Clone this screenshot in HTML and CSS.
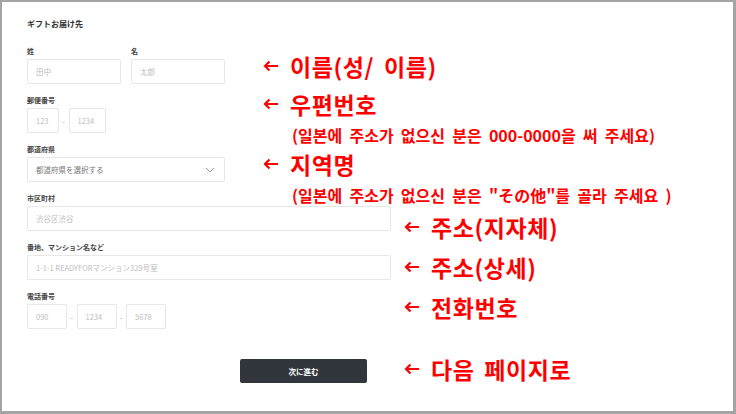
FILE: index.html
```html
<!DOCTYPE html>
<html lang="ja">
<head>
<meta charset="utf-8">
<title>ギフトお届け先</title>
<link rel="stylesheet" href="styles.css">
</head>
<body>
<div class="frame">
  <div class="form">
    <h1 class="title">ギフトお届け先</h1>

    <div class="row">
      <div class="field">
        <div class="label">姓</div>
        <div class="box w-name"><span class="ph">田中</span></div>
      </div>
      <div class="field">
        <div class="label">名</div>
        <div class="box w-name"><span class="ph">太郎</span></div>
      </div>
    </div>

    <div class="field">
      <div class="label">郵便番号</div>
      <div class="split">
        <div class="box w-zip1"><span class="ph">123</span></div>
        <span class="dash">-</span>
        <div class="box w-zip2"><span class="ph">1234</span></div>
      </div>
    </div>

    <div class="field">
      <div class="label">都道府県</div>
      <div class="box w-select select">
        <span class="val">都道府県を選択する</span>
        <svg class="chev" width="10" height="6" viewBox="0 0 10 6"><path d="M1 1 L5 5 L9 1" fill="none" stroke="#9a9a9a" stroke-width="1"/></svg>
      </div>
    </div>

    <div class="field">
      <div class="label">市区町村</div>
      <div class="box w-long"><span class="ph">渋谷区渋谷</span></div>
    </div>

    <div class="field">
      <div class="label">番地、マンション名など</div>
      <div class="box w-long"><span class="ph">1-1-1 READYFORマンション329号室</span></div>
    </div>

    <div class="field">
      <div class="label">電話番号</div>
      <div class="split">
        <div class="box w-tel"><span class="ph">090</span></div>
        <span class="dash">-</span>
        <div class="box w-tel"><span class="ph">1234</span></div>
        <span class="dash">-</span>
        <div class="box w-tel"><span class="ph">5678</span></div>
      </div>
    </div>

    <div class="actions">
      <button class="next">次に進む</button>
    </div>
  </div>

  <div class="note n1"><svg class="arr" width="16" height="12" viewBox="0 0 16 12"><path d="M15 6 H2 M6.5 1.5 L2 6 L6.5 10.5" fill="none" stroke="#ff0000" stroke-width="2.2"/></svg><span class="big">이름(성/ 이름)</span></div>
  <div class="note n2"><svg class="arr" width="16" height="12" viewBox="0 0 16 12"><path d="M15 6 H2 M6.5 1.5 L2 6 L6.5 10.5" fill="none" stroke="#ff0000" stroke-width="2.2"/></svg><span class="big">우편번호</span></div>
  <div class="sub s2">(일본에 주소가 없으신 분은 000-0000을 써 주세요)</div>
  <div class="note n3"><svg class="arr" width="16" height="12" viewBox="0 0 16 12"><path d="M15 6 H2 M6.5 1.5 L2 6 L6.5 10.5" fill="none" stroke="#ff0000" stroke-width="2.2"/></svg><span class="big">지역명</span></div>
  <div class="sub s3">(일본에 주소가 없으신 분은 "その他"를 골라 주세요 )</div>
  <div class="note n4"><svg class="arr" width="16" height="12" viewBox="0 0 16 12"><path d="M15 6 H2 M6.5 1.5 L2 6 L6.5 10.5" fill="none" stroke="#ff0000" stroke-width="2.2"/></svg><span class="big">주소(지자체)</span></div>
  <div class="note n5"><svg class="arr" width="16" height="12" viewBox="0 0 16 12"><path d="M15 6 H2 M6.5 1.5 L2 6 L6.5 10.5" fill="none" stroke="#ff0000" stroke-width="2.2"/></svg><span class="big">주소(상세)</span></div>
  <div class="note n6"><svg class="arr" width="16" height="12" viewBox="0 0 16 12"><path d="M15 6 H2 M6.5 1.5 L2 6 L6.5 10.5" fill="none" stroke="#ff0000" stroke-width="2.2"/></svg><span class="big">전화번호</span></div>
  <div class="note n7"><svg class="arr" width="16" height="12" viewBox="0 0 16 12"><path d="M15 6 H2 M6.5 1.5 L2 6 L6.5 10.5" fill="none" stroke="#ff0000" stroke-width="2.2"/></svg><span class="big">다음 페이지로</span></div>
</div>
</body>
</html>
```

FILE: styles.css
```css
* { box-sizing: border-box; }
html, body { margin: 0; padding: 0; background: #fff; }

.frame {
  position: relative;
  width: 736px;
  height: 414px;
  background: #fff;
  border-style: solid;
  border-color: #a4a4a4;
  border-width: 2px 3px 3px 2px;
  overflow: hidden;
  font-family: "Noto Sans CJK JP", "Noto Sans", sans-serif;
}

.form {
  padding: 16px 0 0 25px;
  display: flex;
  flex-direction: column;
  gap: 11px;
}

.title {
  margin: 0 0 5px 0;
  font-size: 8px;
  line-height: 12px;
  font-weight: 700;
  color: #333;
}

.row { display: flex; gap: 10px; }

.field { display: flex; flex-direction: column; gap: 3px; }

.label {
  font-size: 7px;
  line-height: 10px;
  font-weight: 700;
  color: #444;
}

.box {
  height: 25px;
  border: 1px solid #e7e7e7;
  border-radius: 2px;
  display: flex;
  align-items: center;
  padding-left: 8px;
  background: #fff;
}

.ph {
  font-size: 7.5px;
  color: #bdbdbd;
  white-space: nowrap;
}

.val {
  font-size: 7.5px;
  color: #777;
  white-space: nowrap;
}

.w-name { width: 94px; }
.w-zip1 { width: 32px; }
.w-zip2 { width: 37px; }
.w-select { width: 198px; }
.w-long { width: 364px; }
.w-tel { width: 40px; }

.select { justify-content: space-between; padding-right: 9px; }
.chev { display: block; }

.split { display: flex; align-items: center; }
.dash {
  width: 9.5px;
  text-align: center;
  font-size: 7px;
  color: #999;
}

.actions { display: flex; padding: 19px 0 0 213px; }
.next {
  display: block;
  width: 127px;
  height: 24px;
  border: 0;
  border-radius: 2px;
  background: #31363c;
  color: #fff;
  font-family: "Noto Sans CJK JP", sans-serif;
  font-size: 7.5px;
  font-weight: 700;
  padding: 0;
}

/* annotations (callouts over the screenshot) */
.note {
  position: absolute;
  display: flex;
  align-items: center;
  gap: 11px;
  color: #ff0000;
  font-family: "Noto Sans CJK KR", "Noto Sans", sans-serif;
  font-weight: 700;
  white-space: nowrap;
}
.arr { display: block; }
.big { font-size: 23px; line-height: 26px; letter-spacing: 0.6px; word-spacing: 4px; }

.sub {
  position: absolute;
  color: #ff0000;
  font-family: "Noto Sans CJK KR", "Noto Sans", sans-serif;
  font-weight: 700;
  font-size: 16px;
  line-height: 18px;
  word-spacing: 3.6px;
  white-space: nowrap;
}

.n1 { left: 261px; top: 51px; }
.n2 { left: 261px; top: 89px; }
.s2 { left: 290px; top: 124px; }
.n3 { left: 261px; top: 149px; }
.s3 { left: 290px; top: 184px; }
.n4 { left: 402px; top: 212px; }
.n5 { left: 402px; top: 252px; }
.n6 { left: 402px; top: 292px; }
.n7 { left: 402px; top: 354px; }
```
